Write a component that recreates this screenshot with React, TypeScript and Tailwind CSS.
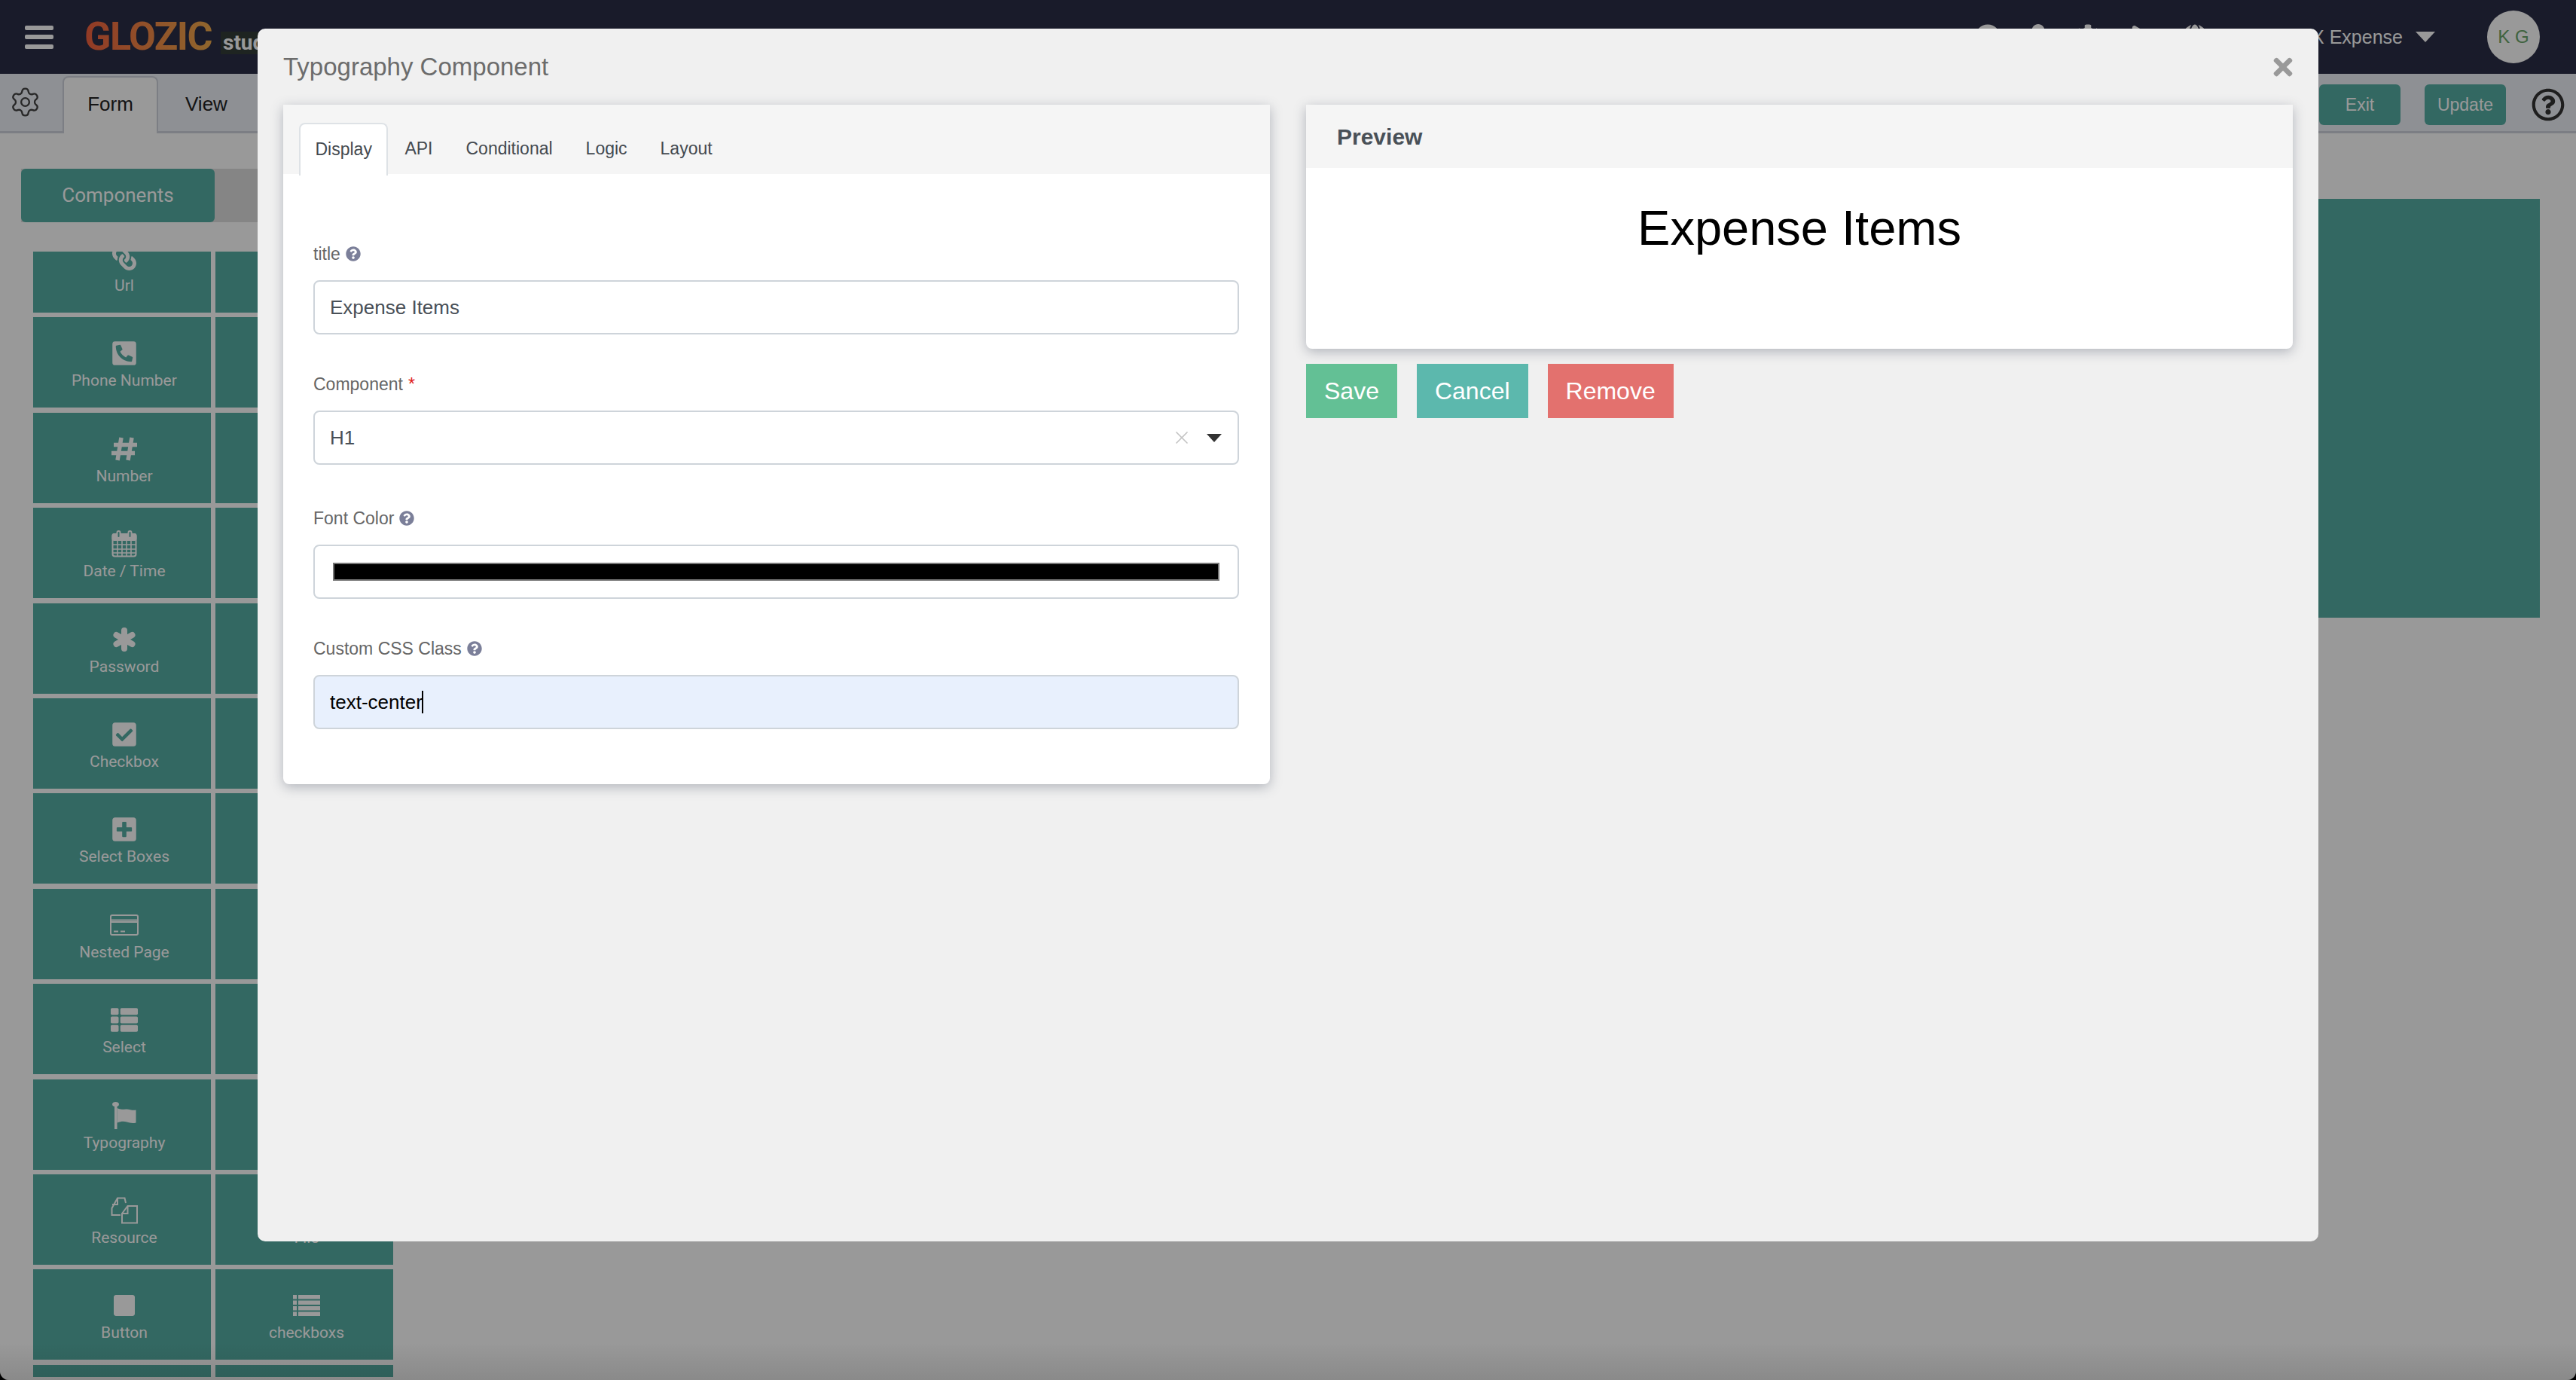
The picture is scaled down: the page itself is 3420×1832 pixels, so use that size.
import React from 'react';
import {
  FaCheckSquare,
  FaCog,
  FaGlobe,
  FaLink,
  FaPhoneSquareAlt,
  FaPlay,
  FaPlusSquare,
  FaQuestionCircle,
  FaRegQuestionCircle,
  FaStop,
  FaThList,
  FaTimes,
  FaUser,
} from 'react-icons/fa';
import { Settings, X } from 'lucide-react';

const HashIcon = () => (
  <svg width="34" height="32" viewBox="0 0 34 32" fill="none" stroke="currentColor" strokeWidth="5.500">
    <path d="M13 1 8 31M27 1l-5 30M3 10.500h31M0 21.500h31" />
  </svg>
);

const AsteriskIcon = () => (
  <svg width="30" height="32" viewBox="0 0 30 32" fill="none" stroke="currentColor" strokeWidth="8" strokeLinecap="round">
    <path d="M15 4v24M4.500 10 25.500 22M25.500 10 4.500 22" />
  </svg>
);

const CalendarIcon = () => (
  <svg width="34" height="36" viewBox="0 0 34 36" fill="none" stroke="currentColor" strokeWidth="2">
    <rect x="1.500" y="5" width="31" height="29.500" rx="3" />
    <rect x="1.500" y="5" width="31" height="8" rx="2" fill="currentColor" />
    <path d="M1.500 19h31M1.500 25h31M1.500 30h31M8 13v21M14 13v21M20 13v21M26 13v21" strokeWidth="1.600" />
    <rect x="7.500" y="1" width="4" height="9" rx="2" fill="#56aea4" />
    <rect x="22.500" y="1" width="4" height="9" rx="2" fill="#56aea4" />
  </svg>
);

const CardIcon = () => (
  <svg width="38" height="28" viewBox="0 0 38 28" fill="none" stroke="currentColor" strokeWidth="2">
    <rect x="1" y="1" width="36" height="26" rx="2" />
    <path d="M1 7.500h36M1 10h36" />
    <path d="M5 22.500h6M14 22.500h6" />
  </svg>
);

const ListIcon = () => (
  <svg width="36" height="28" viewBox="0 0 36 28" fill="currentColor">
    <rect y="0" width="5" height="5.500" />
    <rect x="7" y="0" width="29" height="5.500" />
    <rect y="7.500" width="5" height="5.500" />
    <rect x="7" y="7.500" width="29" height="5.500" />
    <rect y="15" width="5" height="5.500" />
    <rect x="7" y="15" width="29" height="5.500" />
    <rect y="22.500" width="5" height="5.500" />
    <rect x="7" y="22.500" width="29" height="5.500" />
  </svg>
);

const FlagIcon = () => (
  <svg width="32" height="36" viewBox="0 0 32 36" fill="currentColor">
    <ellipse cx="4.500" cy="3" rx="4.500" ry="3" />
    <rect x="3" y="4" width="3.500" height="32" />
    <path d="M6.500 8c5 3 9 1 13 1.500 4 .5 8 2 12 1v17c-4 1-8 .5-12-1-4-1-8-1-13 1z" />
  </svg>
);

const FilesIcon = () => (
  <svg width="38" height="36" viewBox="0 0 36 36" fill="none" stroke="currentColor" strokeWidth="2">
    <path d="M13 24H1.500v-9L9 1.500h9.500L20 8" />
    <path d="M9 2v8H2" />
    <path d="M15 34.500V22l7.500-10H35v22.500z" fill="#56aea4" />
    <path d="M22.500 12.500V22H15" />
  </svg>
);

const cells = [
  { label: 'Url', icon: <FaLink size={32} className="-scale-x-100" /> },
  { label: '' },
  { label: 'Phone Number', icon: <FaPhoneSquareAlt size={36} /> },
  { label: '' },
  { label: 'Number', icon: <HashIcon /> },
  { label: '' },
  { label: 'Date / Time', icon: <CalendarIcon /> },
  { label: '' },
  { label: 'Password', icon: <AsteriskIcon /> },
  { label: '' },
  { label: 'Checkbox', icon: <FaCheckSquare size={36} /> },
  { label: '' },
  { label: 'Select Boxes', icon: <FaPlusSquare size={36} /> },
  { label: '' },
  { label: 'Nested Page', icon: <CardIcon /> },
  { label: '' },
  { label: 'Select', icon: <FaThList size={36} /> },
  { label: '' },
  { label: 'Typography', icon: <FlagIcon /> },
  { label: '' },
  { label: 'Resource', icon: <FilesIcon /> },
  { label: 'File' },
  { label: 'Button', icon: <FaStop size={32} /> },
  { label: 'checkboxs', icon: <ListIcon /> },
  { label: '' },
  { label: '' },
];

const Help = () => <FaQuestionCircle size={20} className="text-[#7b7f99] ml-[7px]" />;

const App: React.FC = () => {
  return (
    <div className="w-[3420px] h-[1832px] bg-black font-['Liberation_Sans',sans-serif]">
      <div className="relative w-full h-full overflow-hidden rounded-b-[12px] bg-white">
        {/* Top bar */}
        <header className="h-[98px] bg-[#2b2e46] flex items-center pl-[33px] pr-[48px]">
          <div className="w-[38px] flex flex-col gap-[6.500px]">
            <div className="h-[6px] rounded-[2px] bg-white" />
            <div className="h-[6px] rounded-[2px] bg-white" />
            <div className="h-[6px] rounded-[2px] bg-white" />
          </div>
          <div className="ml-[41px] bg-linear-to-r from-[#f2603f] to-[#efaa4c] bg-clip-text text-transparent font-['Roboto',sans-serif] font-bold text-[52px] tracking-[-1.500px] leading-none blur-[0.700px]">
            GLOZIC
          </div>
          <div className="ml-[12px] mt-[16px] h-[30px] px-[3px] bg-[#323c38] text-white font-['Roboto',sans-serif] font-bold text-[28px] leading-[30px]">
            studio
          </div>
          <div className="ml-auto flex items-center text-white">
            <FaQuestionCircle size={34} className="mr-[33px]" />
            <FaUser size={34} className="mr-[32px]" />
            <FaCog size={34} className="mr-[40px]" />
            <FaPlay size={30} className="mr-[38px]" />
            <FaGlobe size={34} className="mr-[138px]" />
            <span className="mt-[2px] text-[25px]">X Expense</span>
            <svg width="26" height="14" viewBox="0 0 26 14" fill="currentColor" className="ml-[17px]">
              <path d="M0 0h26L13 14z" />
            </svg>
            <div className="ml-[69px] w-[70px] h-[70px] rounded-full bg-white flex items-center justify-center text-[#6aa56a] text-[24px]">
              K G
            </div>
          </div>
        </header>

        {/* Toolbar */}
        <div className="h-[79px] bg-[#edf0f7] border-b-[3px] border-[#cfd2dc] flex items-end">
          <Settings size={43} strokeWidth={1.300} className="ml-[12px] mb-[17px] text-[#444]" />
          <div className="ml-[28px] w-[127px] h-[76px] -mb-[3px] bg-white border-2 border-b-0 border-[#cfd2dc] rounded-t-[8px] flex items-center justify-center pb-[3px] text-[26px] text-[#222]">
            Form
          </div>
          <div className="ml-[36px] mb-[16px] text-[26px] text-[#222]">View</div>
          <div className="ml-auto flex items-center gap-[32px] mb-[8px] mr-[15px]">
            <div className="w-[108px] h-[54px] rounded-[6px] bg-[#56aea4] flex items-center justify-center text-white text-[23px]">
              Exit
            </div>
            <div className="w-[108px] h-[54px] rounded-[6px] bg-[#56aea4] flex items-center justify-center text-white text-[23px]">
              Update
            </div>
            <FaRegQuestionCircle size={44} className="ml-[2px] text-[#333]" />
          </div>
        </div>

        {/* Builder */}
        <div className="flex">
          <aside className="w-[560px] shrink-0 pl-[28px] pt-[47px]">
            <div className="h-[71px] bg-[#dedede]">
              <div className="w-[257px] h-full rounded-[6px] bg-[#56aea4] flex items-center justify-center text-white text-[26px] font-['Roboto',sans-serif]">
                Components
              </div>
            </div>
            <div className="ml-[16px] mt-[39px] h-[1494px] overflow-hidden">
              <div className="-mt-[39px] grid grid-cols-[236px_236px] gap-x-[6px] gap-y-[6.400px] font-['Roboto',sans-serif]">
                {cells.map((cell, index) => (
                  <div key={index} className="h-[120px] pl-[6px] bg-[#56aea4] text-white flex flex-col items-center">
                    <div className="mt-[30px] h-[36px] flex items-center justify-center">{cell.icon}</div>
                    <div className="mt-[4px] h-[28px] text-[21px] leading-[28px]">{cell.label}</div>
                  </div>
                ))}
              </div>
            </div>
          </aside>
          <main className="flex-1 pt-[87px] pr-[48px]">
            <div className="h-[556px] bg-[#56aea4]" />
          </main>
        </div>

        {/* Backdrop */}
        <div className="absolute inset-0 bg-black/40" />
        <div className="absolute inset-x-0 bottom-0 h-[50px] bg-linear-to-b from-transparent to-black/10" />

        {/* Modal */}
        <div className="absolute left-[342px] top-[38px] w-[2736px] h-[1610px] rounded-[10px] bg-[#f0f0f0] px-[34px]">
          <div className="h-[101px] flex items-center justify-between pt-[1px]">
            <span className="text-[33px] text-[#6c6c6c]">Typography Component</span>
            <FaTimes size={36} className="-mr-[5px] text-[#999]" />
          </div>

          <div className="grid grid-cols-2 gap-x-[48px] items-start">
            {/* Settings card */}
            <div className="bg-white rounded-b-[8px] shadow-[0_4px_16px_rgba(60,70,90,0.35)]">
              <div className="h-[92px] bg-[#f5f5f5] pt-[24px] pl-[21px] flex text-[23px] text-[#444a50]">
                <div className="h-[70px] px-[19.500px] bg-white border-2 border-b-0 border-[#dee2e6] rounded-t-[8px] flex items-center pb-[2px]">
                  Display
                </div>
                <div className="h-[70px] px-[22px] flex items-center pb-[2px]">API</div>
                <div className="h-[70px] px-[22px] flex items-center pb-[2px]">Conditional</div>
                <div className="h-[70px] px-[22px] flex items-center pb-[2px]">Logic</div>
                <div className="h-[70px] px-[22px] flex items-center pb-[2px]">Layout</div>
              </div>

              <div className="pl-[40px] pr-[41px] pt-[90px] pb-[73px] text-[23px] text-[#666]">
                <div className="h-[32px] flex items-center">
                  title
                  <Help />
                </div>
                <div className="mt-[19px] h-[72px] border-2 border-[#ced4da] rounded-[8px] bg-white flex items-center px-[20px] text-[26px] text-[#495057]">
                  Expense Items
                </div>

                <div className="mt-[50px] h-[32px] flex items-center">
                  Component
                  <span className="ml-[7px] text-[#e02020]">*</span>
                </div>
                <div className="mt-[19px] h-[72px] border-2 border-[#ced4da] rounded-[8px] bg-white flex items-center pl-[20px] pr-[21px] text-[26px] text-[#495057]">
                  H1
                  <X size={28} strokeWidth={1.500} className="ml-auto text-[#c4c4c4]" />
                  <svg width="20" height="11" viewBox="0 0 20 11" fill="#333" className="ml-[19px]">
                    <path d="M0 0h20L10 11z" />
                  </svg>
                </div>

                <div className="mt-[55px] h-[32px] flex items-center">
                  Font Color
                  <Help />
                </div>
                <div className="mt-[19px] h-[72px] border-2 border-[#ced4da] rounded-[8px] bg-white flex items-center px-[24px]">
                  <div className="w-full h-[24px] bg-black border-2 border-[#767676]" />
                </div>

                <div className="mt-[50px] h-[32px] flex items-center">
                  Custom CSS Class
                  <Help />
                </div>
                <div className="mt-[19px] h-[72px] border-2 border-[#ced4da] rounded-[8px] bg-[#e8f0fd] flex items-center px-[20px] text-[26px] text-black">
                  text-center
                  <span className="-ml-[1px] w-[2px] h-[30px] bg-black" />
                </div>
              </div>
            </div>

            {/* Preview card */}
            <div>
              <div className="h-[324px] bg-white rounded-b-[8px] shadow-[0_4px_16px_rgba(60,70,90,0.35)]">
                <div className="h-[84px] bg-[#f5f5f5] px-[41px] flex items-center text-[30px] font-bold text-[#495057]">
                  Preview
                </div>
                <h1 className="pt-[41px] text-center text-[65px] leading-[1.2] text-black">Expense Items</h1>
              </div>
              <div className="mt-[20px] flex gap-[26px] text-[32px] text-white">
                <div className="h-[72px] px-[24px] bg-[#63c095] flex items-center">Save</div>
                <div className="h-[72px] px-[24px] bg-[#5cb8ad] flex items-center">Cancel</div>
                <div className="h-[72px] px-[24px] bg-[#e3716e] flex items-center">Remove</div>
              </div>
            </div>
          </div>
        </div>
      </div>
    </div>
  );
};

export default App;
